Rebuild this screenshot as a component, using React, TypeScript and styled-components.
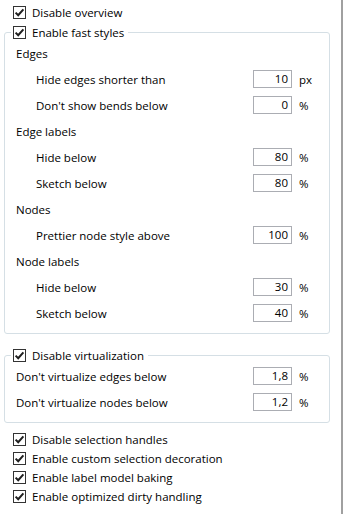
import React from 'react';
import styled, { createGlobalStyle } from 'styled-components';

const GlobalStyle = createGlobalStyle`
  html, body {
    margin: 0;
    padding: 0;
    background: #ffffff;
  }
  body {
    font-family: 'Open Sans', 'Noto Sans', sans-serif;
    font-size: 11.5px;
    color: #000000;
  }
`;

const Panel = styled.div`
  box-sizing: border-box;
  width: 343px;
  height: 514px;
  padding: 3px 11px 0 4px;
  border-right: 2px solid #a0a0a0;
  display: flex;
  flex-direction: column;
`;

const CheckRow = styled.label`
  display: flex;
  align-items: center;
  gap: 6px;
  height: 19px;
  padding-left: 9px;
  white-space: nowrap;
`;

const Box = styled.span`
  box-sizing: border-box;
  width: 13px;
  height: 13px;
  border: 1px solid #333333;
  background: #ffffff;
  display: flex;
  align-items: center;
  justify-content: center;
  flex-shrink: 0;
`;

const Group = styled.fieldset<{ $top: number }>`
  margin: ${(p) => p.$top}px 0 0 0;
  padding: 0 0 7px 0;
  border: 1px solid #d5dfe5;
  border-radius: 3px;
  min-width: 0;
`;

const Legend = styled.legend`
  margin-left: 6px;
  padding: 0 4px 0 2px;
  height: 16px;
  display: flex;
  align-items: center;
`;

const LegendCheck = styled(CheckRow)`
  padding-left: 0;
  height: 16px;
`;

const Row = styled.div<{ $indent: number }>`
  display: flex;
  align-items: center;
  height: 26px;
  padding-left: ${(p) => p.$indent}px;
  white-space: nowrap;
`;

const Label = styled.span`
  flex: 1;
`;

const NumberBox = styled.div`
  box-sizing: border-box;
  width: 39px;
  height: 18px;
  border: 1px solid #abadb3;
  background: #ffffff;
  text-align: right;
  padding-right: 3px;
  line-height: 16px;
`;

const Unit = styled.span`
  width: 37px;
  padding-left: 7px;
  box-sizing: border-box;
`;

const Check = () => (
  <Box>
    <svg width="11" height="11" viewBox="0 0 11 11">
      <path d="M1.6 5.6 L4.2 8.2 L9.4 2.4" fill="none" stroke="#1f1f1f" strokeWidth="2" />
    </svg>
  </Box>
);

type Setting = { label: string; value: string; unit: string };

const fastStyles: { heading: string; items: Setting[] }[] = [
  {
    heading: 'Edges',
    items: [
      { label: 'Hide edges shorter than', value: '10', unit: 'px' },
      { label: "Don't show bends below", value: '0', unit: '%' },
    ],
  },
  {
    heading: 'Edge labels',
    items: [
      { label: 'Hide below', value: '80', unit: '%' },
      { label: 'Sketch below', value: '80', unit: '%' },
    ],
  },
  {
    heading: 'Nodes',
    items: [{ label: 'Prettier node style above', value: '100', unit: '%' }],
  },
  {
    heading: 'Node labels',
    items: [
      { label: 'Hide below', value: '30', unit: '%' },
      { label: 'Sketch below', value: '40', unit: '%' },
    ],
  },
];

const virtualization: Setting[] = [
  { label: "Don't virtualize edges below", value: '1,8', unit: '%' },
  { label: "Don't virtualize nodes below", value: '1,2', unit: '%' },
];

const bottomChecks = [
  'Disable selection handles',
  'Enable custom selection decoration',
  'Enable label model baking',
  'Enable optimized dirty handling',
];

const SettingRow = ({ s, indent }: { s: Setting; indent: number }) => (
  <Row $indent={indent}>
    <Label>{s.label}</Label>
    <NumberBox>{s.value}</NumberBox>
    <Unit>{s.unit}</Unit>
  </Row>
);

const BottomList = styled.div`
  margin-top: 7px;
  display: flex;
  flex-direction: column;
`;

export default function App() {
  return (
    <>
      <GlobalStyle />
      <Panel>
        <CheckRow>
          <Check />
          Disable overview
        </CheckRow>
        <Group $top={2}>
          <Legend>
            <LegendCheck>
              <Check />
              Enable fast styles
            </LegendCheck>
          </Legend>
          {fastStyles.map((sec) => (
            <React.Fragment key={sec.heading}>
              <Row $indent={11}>{sec.heading}</Row>
              {sec.items.map((s) => (
                <SettingRow key={sec.heading + s.label} s={s} indent={31} />
              ))}
            </React.Fragment>
          ))}
        </Group>
        <Group $top={13}>
          <Legend>
            <LegendCheck>
              <Check />
              Disable virtualization
            </LegendCheck>
          </Legend>
          {virtualization.map((s) => (
            <SettingRow key={s.label} s={s} indent={11} />
          ))}
        </Group>
        <BottomList>
          {bottomChecks.map((t) => (
            <CheckRow key={t}>
              <Check />
              {t}
            </CheckRow>
          ))}
        </BottomList>
      </Panel>
    </>
  );
}
